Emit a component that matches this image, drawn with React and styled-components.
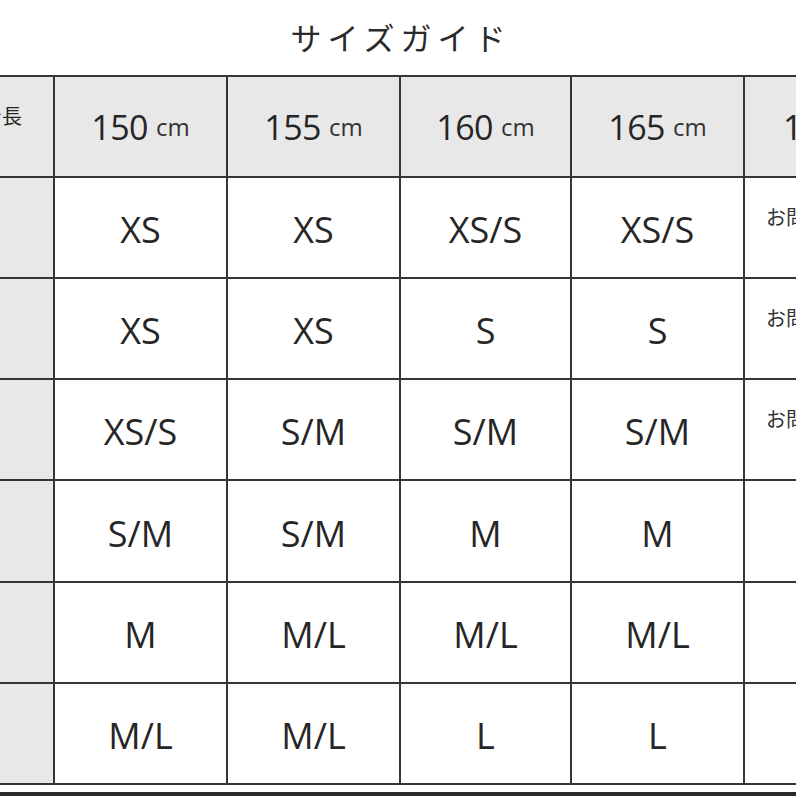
import React from 'react';
import styled, { createGlobalStyle } from 'styled-components';

const GlobalStyle = createGlobalStyle`
  html, body {
    margin: 0;
    padding: 0;
    background: #ffffff;
  }
  body {
    font-family: "Open Sans", "Noto Sans CJK JP", sans-serif;
    color: #222;
  }
`

const Page = styled.div`
  width: 796px;
  height: 796px;
  overflow: hidden;
  display: flex;
  flex-direction: column;
`

const Title = styled.h1`
  margin: 0;
  height: 77px;
  display: flex;
  align-items: center;
  justify-content: center;
  padding-left: 6px;
  padding-bottom: 3px;
  box-sizing: border-box;
  font-family: "Noto Sans CJK JP", sans-serif;
  font-weight: 400;
  font-size: 31px;
  letter-spacing: 6px;
  color: #2a2a2a;
`

const Grid = styled.div`
  display: grid;
  grid-template-columns: 53px 171px 171px 169px 171px 1fr;
  grid-template-rows: 99px 99px 99px 99px 100px 99px 99px;
  gap: 2px;
  background: #353535;
  border-top: 2px solid #353535;
  border-bottom: 2px solid #353535;
`

const Cell = styled.div`
  background: ${p => (p.$shade ? '#e8e8e8' : '#ffffff')};
  display: flex;
  align-items: center;
  justify-content: center;
  overflow: hidden;
  white-space: nowrap;
  font-size: 36px;
  color: #262626;
`

const SizeCell = styled(Cell)`
  padding-top: 4px;
`

const SideCell = styled(Cell)`
  justify-content: flex-end;
  align-items: flex-start;
  padding: 24px 31px 0 0;
  font-family: "Noto Sans CJK JP", sans-serif;
  font-size: 20px;
`

const EdgeCell = styled(Cell)`
  justify-content: flex-start;
  align-items: ${p => (p.$top ? 'flex-start' : 'center')};
  padding: ${p => (p.$top ? '24px 0 0 21px' : '0 0 0 38px')};
`

const Note = styled.span`
  font-family: "Noto Sans CJK JP", sans-serif;
  font-size: 20px;
  color: #333;
`

const Height = styled.span`
  font-size: 34px;
  letter-spacing: -0.5px;
`

const Unit = styled.span`
  font-size: 24px;
  margin-left: 8px;
  color: #333;
`

const Footer = styled.div`
  margin-top: 7px;
  height: 4px;
  background: #2a2a2a;
`

const HEIGHTS = ['150', '155', '160', '165']

const ROWS = [
  ['XS', 'XS', 'XS/S', 'XS/S', 'お問い合わせ'],
  ['XS', 'XS', 'S', 'S', 'お問い合わせ'],
  ['XS/S', 'S/M', 'S/M', 'S/M', 'お問い合わせ'],
  ['S/M', 'S/M', 'M', 'M', ''],
  ['M', 'M/L', 'M/L', 'M/L', ''],
  ['M/L', 'M/L', 'L', 'L', ''],
]

function HeightLabel({ value }) {
  return (
    <>
      <Height>{value}</Height>
      <Unit>cm</Unit>
    </>
  )
}

export default function App() {
  return (
    <Page>
      <GlobalStyle />
      <Title>サイズガイド</Title>
      <Grid>
        <SideCell $shade>身長</SideCell>
        {HEIGHTS.map(h => (
          <Cell $shade key={h}>
            <HeightLabel value={h} />
          </Cell>
        ))}
        <EdgeCell $shade>
          <HeightLabel value="170" />
        </EdgeCell>

        {ROWS.map((row, i) => (
          <React.Fragment key={i}>
            <SideCell $shade />
            {row.slice(0, 4).map((size, j) => (
              <SizeCell key={j}>{size}</SizeCell>
            ))}
            <EdgeCell $top>
              <Note>{row[4]}</Note>
            </EdgeCell>
          </React.Fragment>
        ))}
      </Grid>
      <Footer />
    </Page>
  )
}
